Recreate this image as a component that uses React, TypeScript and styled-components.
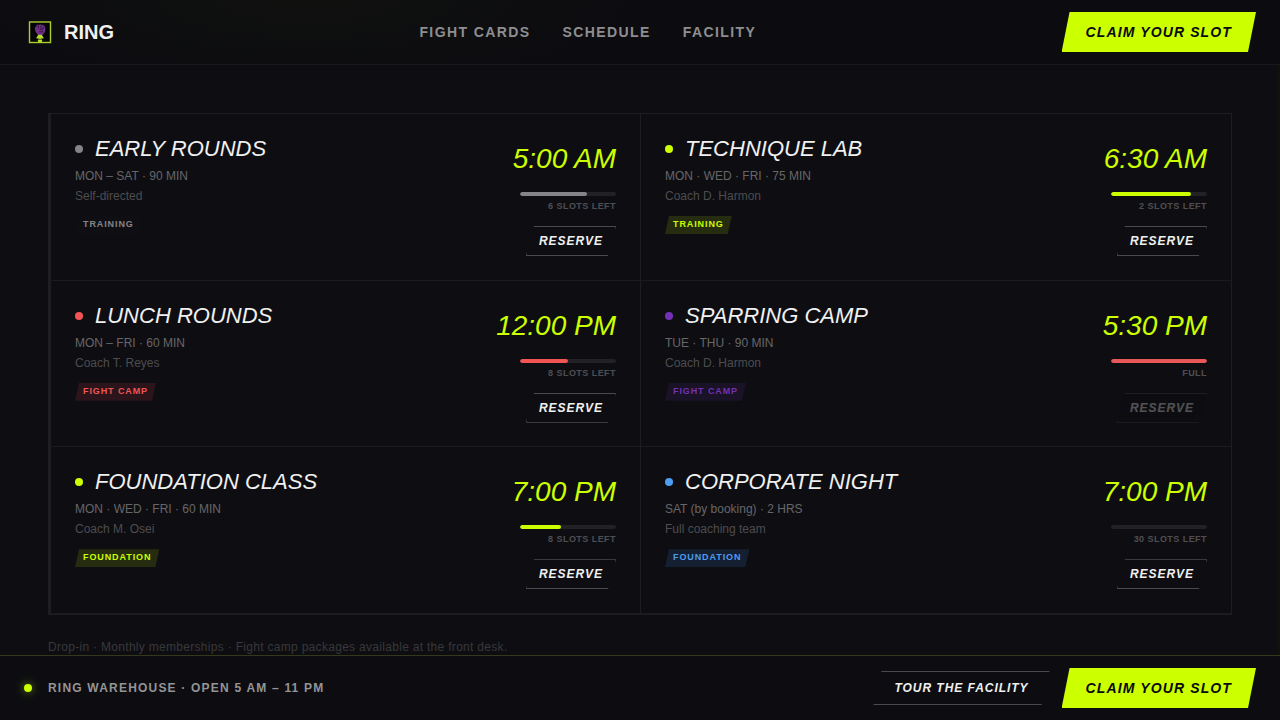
import React from 'react';
import styled, { createGlobalStyle } from 'styled-components';

const LIME = '#ccff00';

const GlobalStyle = createGlobalStyle`
  *, *::before, *::after { box-sizing: border-box; }
  body {
    margin: 0;
    background: #0e0e12;
    color: #f0f0f0;
    font-family: 'Liberation Sans', Arial, sans-serif;
  }
  h2, p { margin: 0; }
`;

const Page = styled.div`
  display: flex;
  flex-direction: column;
  min-height: 100vh;
`;

const Header = styled.header`
  display: flex;
  align-items: center;
  justify-content: space-between;
  padding: 12px 24px;
  border-bottom: 1px solid #1a1a1e;
  background: radial-gradient(ellipse 320px 80px at 24% 0, #10110f, #0c0c10);
`;

const Brand = styled.a`
  display: flex;
  align-items: center;
  gap: 8px;
  color: #f0f0f0;
  font-size: 20px;
  font-weight: 700;
  line-height: 24px;
  text-decoration: none;
`;

const Nav = styled.nav`
  display: flex;
  gap: 32px;
`;

const NavLink = styled.a`
  color: #8e8e90;
  font-size: 14px;
  font-weight: 700;
  letter-spacing: 0.1em;
  line-height: 20px;
  text-decoration: none;
`;

const ClaimButton = styled.button`
  height: 40px;
  padding: 0 24px;
  border: 0;
  background: ${LIME};
  clip-path: polygon(8px 0, 100% 0, calc(100% - 8px) 100%, 0 100%);
  color: #0a0a0f;
  font: italic 700 14px/20px 'Liberation Sans', Arial, sans-serif;
  letter-spacing: 0.08em;
  cursor: pointer;
`;

const GhostButton = styled.button<{ $large?: boolean }>`
  height: ${(p) => (p.$large ? 34 : 30)}px;
  padding: 0 ${(p) => (p.$large ? 20 : 12)}px;
  border: 1px solid #4a4a4e;
  background: transparent;
  clip-path: polygon(8px 0, 100% 0, calc(100% - 8px) 100%, 0 100%);
  color: #f0f0f0;
  font: italic 700 12px/16px 'Liberation Sans', Arial, sans-serif;
  letter-spacing: 0.08em;
  cursor: pointer;

  &:disabled {
    opacity: 0.3;
    cursor: not-allowed;
  }
`;

const Main = styled.main`
  flex: 1;
  padding: 48px 48px 0;
  box-shadow: inset -2px 0 #10120c;
`;

const Schedule = styled.section`
  display: grid;
  grid-template-columns: 1fr 1fr;
  grid-auto-rows: 1fr;
  min-height: 502px;
  border: 1px solid #1e1e22;
`;

const SessionCard = styled.article`
  display: flex;
  justify-content: space-between;
  gap: 24px;
  padding: 24px 24px 20px;
  border-bottom: 1px solid #1b1b1f;
  border-left: 1px solid #1e1e22;

  &:nth-child(odd) { border-left: 2px solid #1e1e22; }
`;

const Details = styled.div`
  display: flex;
  flex-direction: column;
  align-items: flex-start;
`;

const TitleRow = styled.div`
  display: flex;
  align-items: center;
  gap: 12px;
  margin-bottom: 6px;
`;

const Dot = styled.span<{ $color: string; $glow?: boolean }>`
  width: 8px;
  height: 8px;
  border-radius: 50%;
  background: ${(p) => p.$color};
  box-shadow: ${(p) => (p.$glow ? `0 0 8px ${p.$color}80` : 'none')};
`;

const Title = styled.h2`
  font-size: 22px;
  font-style: italic;
  font-weight: 400;
  line-height: 22px;
`;

const Meta = styled.p<{ $dim?: boolean }>`
  color: ${(p) => (p.$dim ? '#4c4c4f' : '#666669')};
  font-size: 12px;
  line-height: 20px;
`;

const Tag = styled.span<{ $color: string; $fill: string }>`
  margin-top: 10px;
  padding: 0 8px 2px;
  background: ${(p) => p.$fill};
  clip-path: polygon(4px 0, 100% 0, calc(100% - 4px) 100%, 0 100%);
  color: ${(p) => p.$color};
  font-size: 9px;
  font-weight: 700;
  letter-spacing: 0.1em;
  line-height: 16px;
`;

const Booking = styled.div`
  display: flex;
  flex-direction: column;
  align-items: flex-end;
`;

const Time = styled.time`
  margin-bottom: 12px;
  color: ${LIME};
  font-size: 28px;
  font-style: italic;
  line-height: 42px;
`;

const Track = styled.div`
  width: 96px;
  height: 4px;
  border-radius: 2px;
  background: #222226;
  overflow: hidden;
`;

const Fill = styled.div<{ $color: string }>`
  height: 100%;
  border-radius: 2px;
  background: ${(p) => p.$color};
`;

const Slots = styled.p`
  margin: 4px 0 14px;
  color: #4e4e52;
  font-size: 9px;
  font-weight: 700;
  letter-spacing: 0.05em;
  line-height: 12px;
`;

const Note = styled.p`
  margin-top: 24px;
  color: #38383b;
  font-size: 12px;
  letter-spacing: 0.025em;
  line-height: 16px;
`;

const BottomBar = styled.footer`
  position: sticky;
  bottom: 0;
  display: flex;
  align-items: center;
  justify-content: space-between;
  padding: 12px 24px;
  border-top: 1px solid #33391a;
  background: #0d0d11;
`;

const Status = styled.div`
  display: flex;
  align-items: center;
  gap: 16px;
  color: #949496;
  font-size: 12px;
  font-weight: 700;
  letter-spacing: 0.1em;
  line-height: 16px;
`;

const Actions = styled.div`
  display: flex;
  align-items: center;
  gap: 12px;
`;

const FistLogo = () => (
  <svg width="32" height="32" viewBox="0 0 32 32" aria-hidden="true">
    <rect x="5.5" y="6" width="21" height="20.5" fill="#050507" stroke="#a9cf2b" strokeWidth="1.4" />
    <path
      d="M11 12.2q0-1.400 1.300-1.600l.3-1.400q1.400-1.200 2.400-.3 1.400-1.200 2.500.1 1.400-.6 2.200.8 1.500 0 1.500 1.800v2.600q0 2.200-1.700 3.400l-.7 1.700h-5l-.8-1.900q-2-1.700-2-4z"
      fill="#6f3185"
    />
    <path d="M14.300 9.500v2.900M16.900 9.500v2.900M19.200 10.400v2.400M15.500 13.400h3.500M15.200 15.800h4" fill="none" stroke="#220b2b" strokeWidth=".8" />
    <path d="M14.400 18.700h3.200l1.900 2.700v1h-2v1.400l.8.800-.8 1.900h-3l-.8-1.900.8-.8v-1.400h-2v-1z" fill="#b4e02c" />
    <path d="M14.600 23.200h2.800" stroke="#1b220a" strokeWidth=".8" />
  </svg>
);

type Session = {
  title: string;
  color: string;
  meta: string;
  coach: string;
  tag: string;
  fill: string;
  time: string;
  taken: number;
  bar: string;
  slots: string;
};

const SESSIONS: Session[] = [
  { title: 'EARLY ROUNDS', color: '#858587', meta: 'MON – SAT · 90 MIN', coach: 'Self-directed', tag: 'TRAINING', fill: '#0f0f13', time: '5:00 AM', taken: 70, bar: '#858587', slots: '6 SLOTS LEFT' },
  { title: 'TECHNIQUE LAB', color: LIME, meta: 'MON · WED · FRI · 75 MIN', coach: 'Coach D. Harmon', tag: 'TRAINING', fill: '#252c10', time: '6:30 AM', taken: 83, bar: LIME, slots: '2 SLOTS LEFT' },
  { title: 'LUNCH ROUNDS', color: '#f05454', meta: 'MON – FRI · 60 MIN', coach: 'Coach T. Reyes', tag: 'FIGHT CAMP', fill: '#2b151a', time: '12:00 PM', taken: 50, bar: '#f05454', slots: '8 SLOTS LEFT' },
  { title: 'SPARRING CAMP', color: '#7331b5', meta: 'TUE · THU · 90 MIN', coach: 'Coach D. Harmon', tag: 'FIGHT CAMP', fill: '#1a1226', time: '5:30 PM', taken: 100, bar: '#e85858', slots: 'FULL' },
  { title: 'FOUNDATION CLASS', color: LIME, meta: 'MON · WED · FRI · 60 MIN', coach: 'Coach M. Osei', tag: 'FOUNDATION', fill: '#252c10', time: '7:00 PM', taken: 43, bar: LIME, slots: '8 SLOTS LEFT' },
  { title: 'CORPORATE NIGHT', color: '#4f9cf0', meta: 'SAT (by booking) · 2 HRS', coach: 'Full coaching team', tag: 'FOUNDATION', fill: '#142031', time: '7:00 PM', taken: 0, bar: '#4f9cf0', slots: '30 SLOTS LEFT' },
];

const SessionItem = ({ session: s }: { session: Session }) => (
  <SessionCard>
    <Details>
      <TitleRow>
        <Dot $color={s.color} />
        <Title>{s.title}</Title>
      </TitleRow>
      <Meta>{s.meta}</Meta>
      <Meta $dim>{s.coach}</Meta>
      <Tag $color={s.color} $fill={s.fill}>{s.tag}</Tag>
    </Details>
    <Booking>
      <Time>{s.time}</Time>
      <Track role="progressbar" aria-valuenow={s.taken} aria-label={`${s.title} places taken`}>
        <Fill $color={s.bar} style={{ width: `${s.taken}%` }} />
      </Track>
      <Slots>{s.slots}</Slots>
      <GhostButton type="button" disabled={s.slots === 'FULL'}>RESERVE</GhostButton>
    </Booking>
  </SessionCard>
);

export default function App() {
  return (
    <Page>
      <GlobalStyle />
      <Header>
        <Brand href="#top">
          <FistLogo />
          RING
        </Brand>
        <Nav>
          <NavLink href="#cards">FIGHT CARDS</NavLink>
          <NavLink href="#schedule">SCHEDULE</NavLink>
          <NavLink href="#facility">FACILITY</NavLink>
        </Nav>
        <ClaimButton type="button">CLAIM YOUR SLOT</ClaimButton>
      </Header>
      <Main>
        <Schedule id="schedule">
          {SESSIONS.map((s) => (
            <SessionItem key={s.title} session={s} />
          ))}
        </Schedule>
        <Note>Drop-in · Monthly memberships · Fight camp packages available at the front desk.</Note>
      </Main>
      <BottomBar>
        <Status>
          <Dot $color={LIME} $glow />
          RING WAREHOUSE · OPEN 5 AM – 11 PM
        </Status>
        <Actions>
          <GhostButton type="button" $large>TOUR THE FACILITY</GhostButton>
          <ClaimButton type="button">CLAIM YOUR SLOT</ClaimButton>
        </Actions>
      </BottomBar>
    </Page>
  );
}
